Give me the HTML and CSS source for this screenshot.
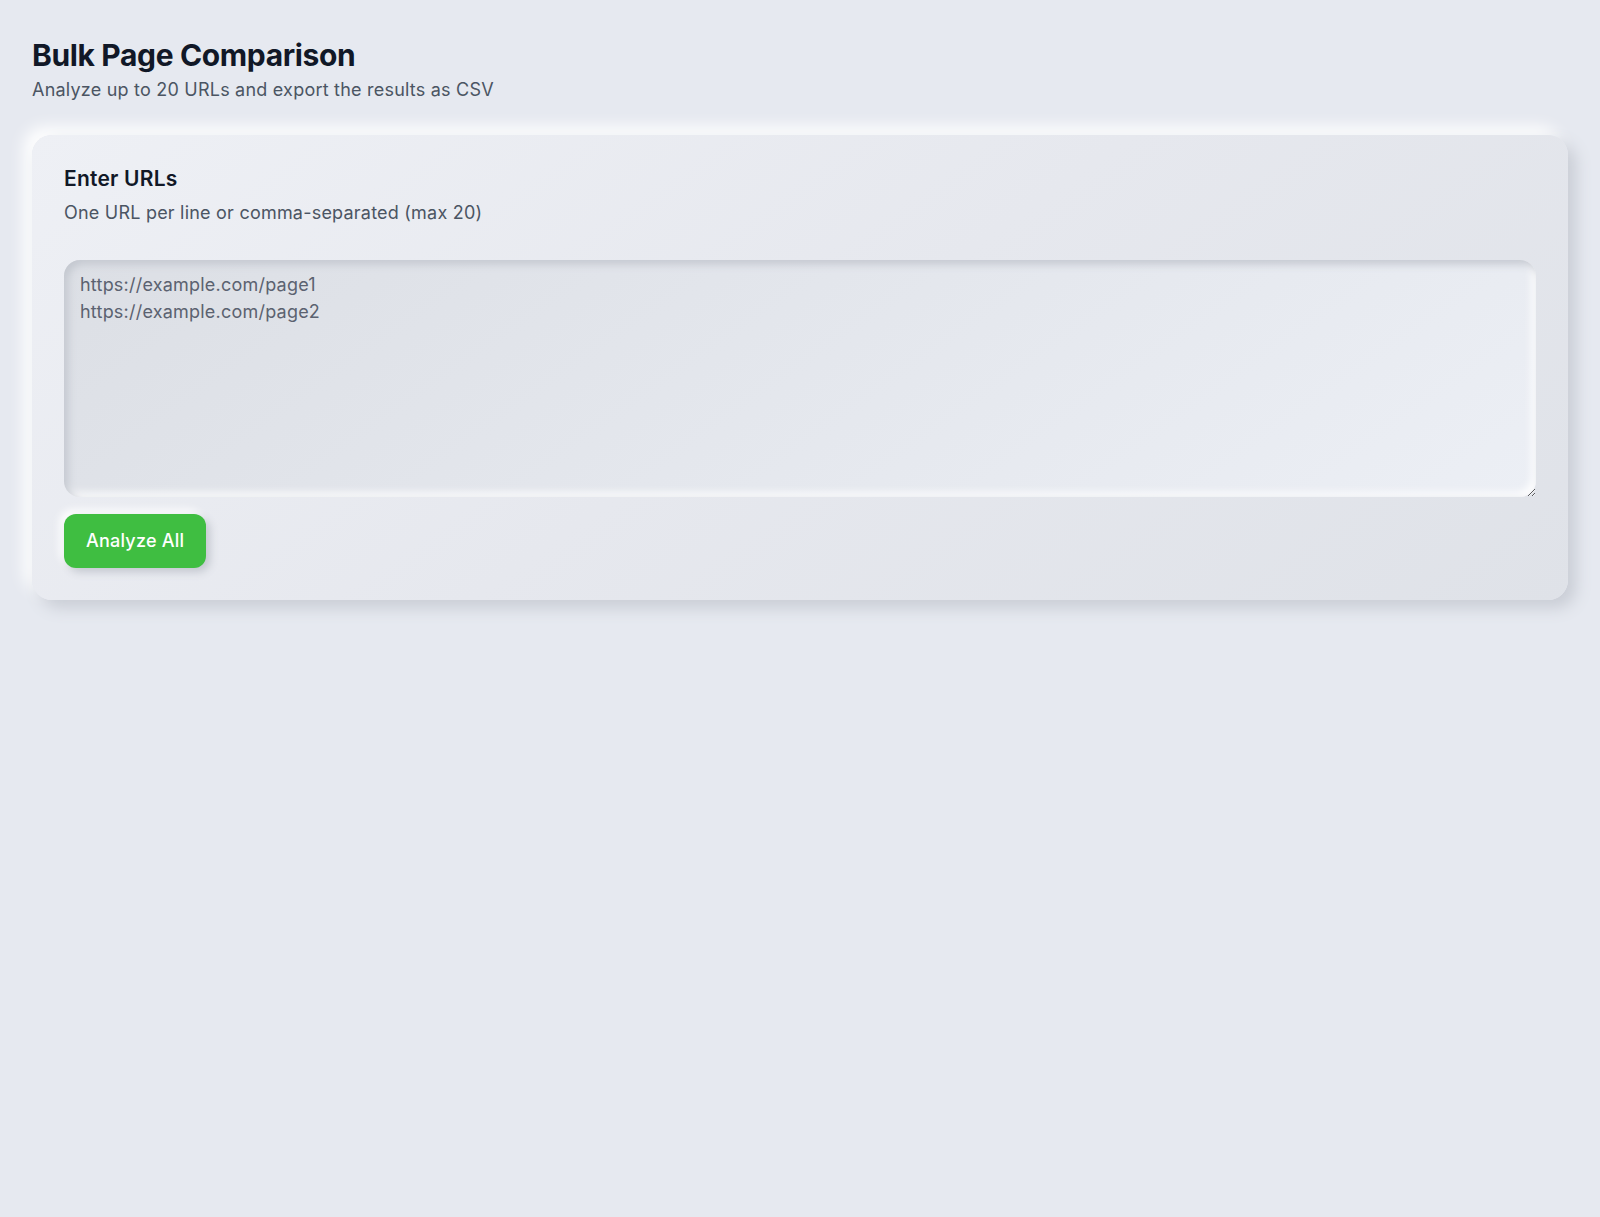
FILE: index.html
```html
<!DOCTYPE html>
<html lang="en">
<head>
<meta charset="utf-8">
<title>Bulk Page Comparison</title>
<link rel="stylesheet" href="styles.css">
</head>
<body>
<main class="page">
  <header class="header">
    <h1 class="title">Bulk Page Comparison</h1>
    <p class="subtitle">Analyze up to 20 URLs and export the results as CSV</p>
  </header>
  <section class="card">
    <h2 class="card-title">Enter URLs</h2>
    <p class="card-desc">One URL per line or comma-separated (max 20)</p>
    <textarea class="urls" placeholder="https://example.com/page1&#10;https://example.com/page2"></textarea>
    <div class="actions">
      <button class="btn" type="button">Analyze All</button>
    </div>
  </section>
</main>
</body>
</html>
```
FILE: styles.css
```css
* { box-sizing: border-box; }
html, body { margin: 0; padding: 0; }
body {
  background: #e6e9f0;
  font-family: Inter, "Noto Sans", "Liberation Sans", sans-serif;
  color: #111827;
  min-height: 100vh;
}
.page {
  padding: 37px 32px 32px;
}
.header {
  margin-bottom: 31px;
}
.title {
  margin: 0;
  font-size: 30px;
  line-height: 36px;
  font-weight: 700;
  letter-spacing: -0.012em;
  color: #111827;
}
.subtitle {
  margin: 3px 0 0;
  font-size: 18px;
  line-height: 28px;
  letter-spacing: 0.012em;
  color: #4b5563;
}
.card {
  border-radius: 20px;
  padding: 30px 32px 32px;
  background: linear-gradient(145deg, #eef0f5 0%, #e6e8ee 50%, #dfe2e8 100%);
  box-shadow: 8px 8px 16px #c9cdd5, -8px -8px 16px #ffffff;
}
.card-title {
  margin: 0;
  font-size: 21px;
  line-height: 28px;
  font-weight: 600;
  letter-spacing: 0.01em;
  color: #111827;
}
.card-desc {
  margin: 6px 0 0;
  font-size: 18px;
  line-height: 28px;
  letter-spacing: 0.012em;
  color: #4b5563;
}
.urls {
  display: block;
  width: 100%;
  height: 237px;
  margin-top: 33px;
  padding: 11px 16px 14px;
  border: none;
  outline: none;
  border-radius: 16px;
  font-family: Inter, "Noto Sans", "Liberation Sans", sans-serif;
  font-size: 18px;
  line-height: 27px;
  letter-spacing: 0.012em;
  color: #374151;
  background: linear-gradient(145deg, #dcdfe5 0%, #e4e7ed 50%, #eceff5 100%);
  box-shadow: inset 4px 4px 8px #c3c7cf, inset -4px -4px 8px #ffffff;
  resize: vertical;
}
.urls::placeholder {
  color: #5b6270;
  opacity: 1;
}
.actions {
  margin-top: 17px;
  display: flex;
}
.btn {
  font-family: Inter, "Noto Sans", "Liberation Sans", sans-serif;
  font-size: 18px;
  line-height: 26px;
  font-weight: 500;
  letter-spacing: 0.012em;
  color: #ffffff;
  background: #3fbe41;
  border: none;
  border-radius: 12px;
  padding: 14px 22px;
  box-shadow: 4px 4px 8px #c3c7cf, -4px -4px 8px #ffffff;
  cursor: pointer;
}
```
